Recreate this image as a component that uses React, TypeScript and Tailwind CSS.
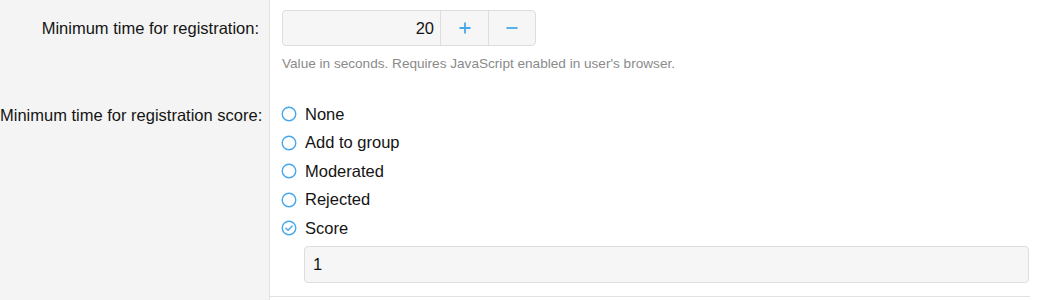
import React, { useState } from 'react';

const options = ['None', 'Add to group', 'Moderated', 'Rejected', 'Score'];

const Radio: React.FC<{ checked: boolean }> = ({ checked }) => (
  <svg width="16" height="16" viewBox="0 0 16 16" className="shrink-0">
    <circle cx="8" cy="8" r="6.8" fill="white" stroke="#47a7eb" strokeWidth="1.4" />
    {checked && (
      <path d="M4.9 8.2 L7.1 10.3 L11.2 5.9" fill="none" stroke="#47a7eb" strokeWidth="1.4" strokeLinecap="round" strokeLinejoin="round" />
    )}
  </svg>
);

const App: React.FC = () => {
  const [value, setValue] = useState(20);
  const [choice, setChoice] = useState('Score');

  return (
    <div className="h-[300px] w-[1038px] overflow-hidden bg-white text-[16.5px] text-[#141414]" style={{ fontFamily: '"Liberation Sans", Arial, sans-serif' }}>
      <div className="flex h-full">
        {/* labels column */}
        <div className="w-[270px] shrink-0 border-r border-[#e2e2e2] bg-[#f4f4f4] pr-[10px] text-right">
          <div className="whitespace-nowrap pt-[18px] leading-[20px]">Minimum time for registration:</div>
          <div className="whitespace-nowrap pt-[67px] leading-[20px]">Minimum time for registration score:</div>
        </div>

        {/* fields column */}
        <div className="flex-1">
          <div className="pl-[12px] pr-[10px]">
            <div className="mt-[10px] flex h-[36px] w-[254px] rounded-[4px] border border-[#dedede] bg-[#f6f6f6]">
              <div className="flex flex-1 items-center justify-end pr-[6px]">{value}</div>
              <button
                className="flex w-[48px] items-center justify-center border-l border-[#dedede] text-[#47a7eb]"
                onClick={() => setValue(value + 1)}
              >
                <svg width="12" height="12" viewBox="0 0 12 12">
                  <path d="M6 0.5 V11.5 M0.5 6 H11.5" stroke="currentColor" strokeWidth="1.8" />
                </svg>
              </button>
              <button
                className="flex w-[47px] items-center justify-center border-l border-[#dedede] text-[#47a7eb]"
                onClick={() => setValue(value - 1)}
              >
                <svg width="12" height="12" viewBox="0 0 12 12">
                  <path d="M0.5 6 H11.5" stroke="currentColor" strokeWidth="1.8" />
                </svg>
              </button>
            </div>
            <p className="mt-[10px] text-[13.6px] leading-[16px] text-[#8a8a8a]">
              Value in seconds. Requires JavaScript enabled in user's browser.
            </p>
          </div>

          <div className="mt-[28px] flex flex-col pl-[11px]">
            {options.map(opt => (
              <label key={opt} className="flex h-[28.5px] cursor-pointer items-center gap-[8px]" onClick={() => setChoice(opt)}>
                <Radio checked={choice === opt} />
                <span>{opt}</span>
              </label>
            ))}
          </div>

          <div className="pl-[34px] pr-[9px] pt-[3px]">
            <div className="flex h-[37px] items-center rounded-[4px] border border-[#dedede] bg-[#f6f6f6] pl-[8px]">1</div>
          </div>

          <div className="mt-[13px] mr-[8px] border-t border-[#e2e2e2]" />
        </div>
      </div>
    </div>
  );
};

export default App;
